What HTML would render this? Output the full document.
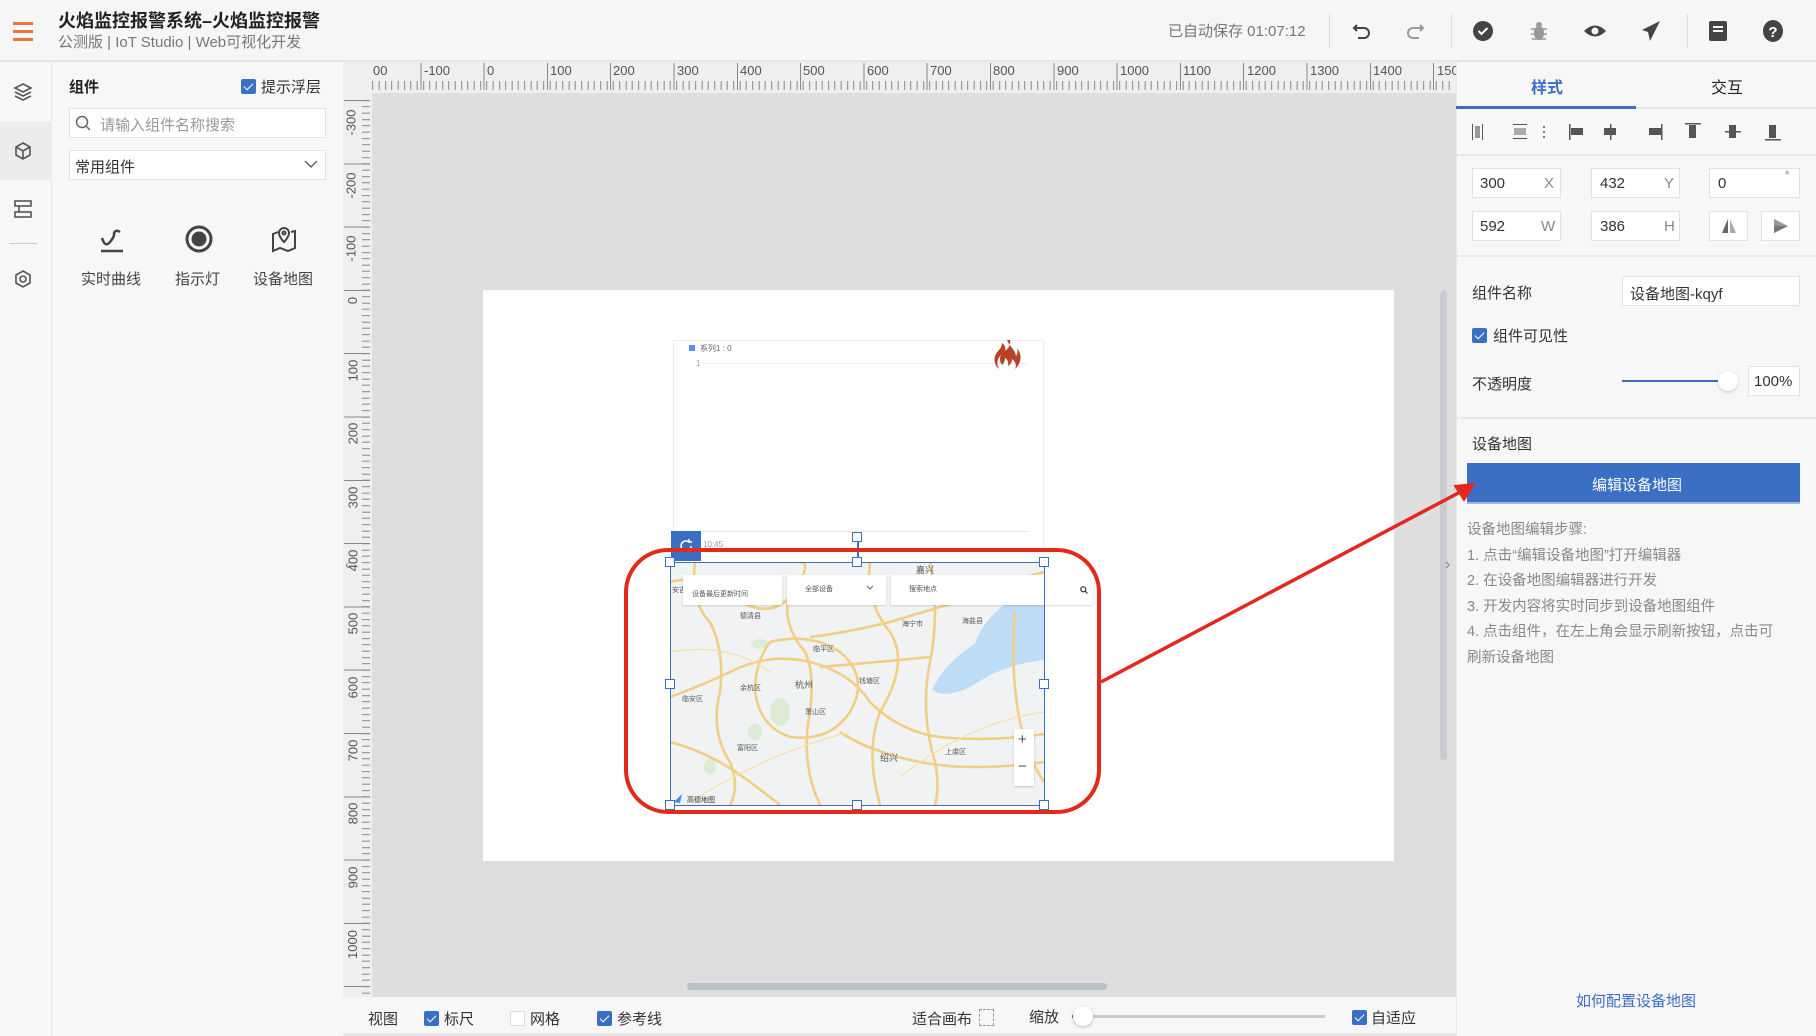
<!DOCTYPE html>
<html><head><meta charset="utf-8">
<style>
*{box-sizing:border-box;margin:0;padding:0}
body{width:1816px;height:1036px;position:relative;overflow:hidden;background:#f7f7f7;font-family:"Liberation Sans","Noto Sans CJK SC",sans-serif;color:#333}
.a{position:absolute}
.t{position:absolute;white-space:nowrap}
.cb{position:absolute;width:15px;height:15px;background:#3b6fc4;border-radius:2px}
.cb:after{content:"";position:absolute;left:5px;top:2px;width:4px;height:8px;border:solid #fff;border-width:0 1.5px 1.5px 0;transform:rotate(45deg)}
.inp{position:absolute;background:#fff;border:1px solid #e2e2e2}
.h{position:absolute;width:10px;height:10px;background:#fff;border:1.5px solid #3b6fc4}
.rl{position:absolute;font-size:13px;color:#555}
</style></head><body>
<!-- header -->
<div class="a" style="left:0;top:0;width:1816px;height:62px;background:#f6f6f6;border-bottom:2px solid #e6e6e6"></div>
<div class="a" style="left:13px;top:22px;width:20px;height:3px;background:#e8773d;box-shadow:0 8px 0 #e8773d,0 16px 0 #e8773d"></div>
<div class="t" style="left:58px;top:7px;font-size:18px;font-weight:bold;color:#222">火焰监控报警系统–火焰监控报警</div>
<div class="t" style="left:58px;top:31px;font-size:15px;color:#777">公测版 | IoT Studio | Web可视化开发</div>
<div class="t" style="left:1168px;top:20px;font-size:15px;color:#777">已自动保存 01:07:12</div>
<div class="a" style="left:1329px;top:14px;width:1px;height:34px;background:#ddd"></div>
<div class="a" style="left:1451px;top:14px;width:1px;height:34px;background:#ddd"></div>
<div class="a" style="left:1687px;top:14px;width:1px;height:34px;background:#ddd"></div>
<svg class="a" style="left:1350px;top:19px" width="24" height="24" viewBox="0 0 24 24" fill="none" stroke="#444" stroke-width="2"><path d="M7 6L4 9l3 3"/><path d="M4 9h10a5 5 0 0 1 0 10H8"/></svg>
<svg class="a" style="left:1403px;top:19px" width="24" height="24" viewBox="0 0 24 24" fill="none" stroke="#999" stroke-width="2"><path d="M17 6l3 3-3 3"/><path d="M20 9H10a5 5 0 0 0 0 10h6"/></svg>
<svg class="a" style="left:1472px;top:20px" width="22" height="22" viewBox="0 0 22 22"><circle cx="11" cy="11" r="10" fill="#444"/><path d="M6.5 11l3 3 6-6" stroke="#fff" stroke-width="2" fill="none"/></svg>
<svg class="a" style="left:1528px;top:20px" width="22" height="22" viewBox="0 0 22 22" fill="#999"><ellipse cx="11" cy="13" rx="5" ry="7"/><circle cx="11" cy="5" r="3"/><path d="M3 9h16M3 14h16M4 19h14" stroke="#999" stroke-width="1.5"/></svg>
<svg class="a" style="left:1583px;top:20px" width="24" height="22" viewBox="0 0 24 22"><path d="M1 11Q12 0 23 11Q12 22 1 11Z" fill="#444"/><circle cx="12" cy="11" r="3.5" fill="#f6f6f6"/></svg>
<svg class="a" style="left:1640px;top:19px" width="22" height="24" viewBox="0 0 22 24"><path d="M20 2L2 11l6 2 2 9 3-6z" fill="#444"/></svg>
<svg class="a" style="left:1708px;top:20px" width="20" height="22" viewBox="0 0 20 22"><rect x="1" y="1" width="18" height="20" rx="2" fill="#444"/><path d="M5 7h10M5 11h10" stroke="#f6f6f6" stroke-width="2"/></svg>
<svg class="a" style="left:1762px;top:19px" width="22" height="24" viewBox="0 0 22 24"><ellipse cx="11" cy="12" rx="10" ry="11" fill="#444"/><text x="11" y="18" font-size="15" font-weight="bold" text-anchor="middle" fill="#fff" font-family="Liberation Sans">?</text></svg>

<!-- left icon bar -->
<div class="a" style="left:0;top:62px;width:52px;height:974px;background:#f7f7f7;border-right:1px solid #e6e6e6"></div>
<div class="a" style="left:0;top:122px;width:52px;height:58px;background:#ececec"></div>
<svg class="a" style="left:13px;top:82px" width="20" height="20" viewBox="0 0 20 20" fill="none" stroke="#555" stroke-width="1.6"><path d="M10 2l8 4-8 4-8-4z"/><path d="M2 10l8 4 8-4M2 14l8 4 8-4"/></svg>
<svg class="a" style="left:13px;top:141px" width="20" height="20" viewBox="0 0 20 20" fill="none" stroke="#555" stroke-width="1.6"><path d="M10 2l7 4v8l-7 4-7-4V6z"/><path d="M3 6l7 4 7-4M10 10v8"/></svg>
<svg class="a" style="left:13px;top:199px" width="20" height="20" viewBox="0 0 20 20" fill="none" stroke="#555" stroke-width="1.6"><rect x="2" y="2" width="16" height="5"/><rect x="2" y="13" width="16" height="5"/><path d="M6 7v6"/></svg>
<div class="a" style="left:9px;top:243px;width:28px;height:1px;background:#ccc"></div>
<svg class="a" style="left:13px;top:269px" width="20" height="20" viewBox="0 0 20 20" fill="none" stroke="#555" stroke-width="1.6"><path d="M10 2l7 4v8l-7 4-7-4V6z"/><circle cx="10" cy="10" r="3"/></svg>

<!-- component panel -->
<div class="a" style="left:52px;top:62px;width:291px;height:974px;background:#f7f7f7"></div>
<div class="t" style="left:69px;top:76px;font-size:15px;font-weight:bold;color:#222">组件</div>
<div class="cb" style="left:241px;top:79px"></div>
<div class="t" style="left:261px;top:76px;font-size:15px;color:#333">提示浮层</div>
<div class="inp" style="left:69px;top:108px;width:257px;height:30px"></div>
<svg class="a" style="left:75px;top:115px" width="17" height="17" viewBox="0 0 17 17" fill="none" stroke="#666" stroke-width="1.5"><circle cx="7" cy="7" r="5.5"/><path d="M11 11l4 4"/></svg>
<div class="t" style="left:100px;top:114px;font-size:15px;color:#999">请输入组件名称搜索</div>
<div class="inp" style="left:69px;top:150px;width:257px;height:30px"></div>
<div class="t" style="left:75px;top:156px;font-size:15px;color:#333">常用组件</div>
<svg class="a" style="left:303px;top:158px" width="16" height="12" viewBox="0 0 16 12" fill="none" stroke="#666" stroke-width="1.5"><path d="M2 3l6 6 6-6"/></svg>
<svg class="a" style="left:98px;top:226px" width="28" height="28" viewBox="0 0 28 28" fill="none" stroke="#444" stroke-width="2.5"><path d="M3 25h22"/><path d="M4 12q3 10 8 4t4-9q2-4 6-1"/></svg>
<svg class="a" style="left:185px;top:225px" width="28" height="28" viewBox="0 0 28 28"><circle cx="14" cy="14" r="12" fill="none" stroke="#444" stroke-width="3"/><circle cx="14" cy="14" r="7.5" fill="#444"/></svg>
<svg class="a" style="left:270px;top:224px" width="28" height="30" viewBox="0 0 28 30" fill="none" stroke="#444" stroke-width="2"><path d="M8 8l-5 2v17l7-3 8 3 7-3V7l-4 1"/><path d="M14 18s-5-5-5-9a5 5 0 0 1 10 0c0 4-5 9-5 9z"/><circle cx="14" cy="9" r="1.5"/></svg>
<div class="t" style="left:81px;top:268px;font-size:15px;color:#444">实时曲线</div>
<div class="t" style="left:175px;top:268px;font-size:15px;color:#444">指示灯</div>
<div class="t" style="left:253px;top:268px;font-size:15px;color:#444">设备地图</div>

<!-- canvas -->
<div class="a" style="left:343px;top:62px;width:1113px;height:935px;background:#dedede"></div>
<div class="a" style="left:343px;top:62px;width:1113px;height:31px;background:#efefef;overflow:hidden">
  <div class="a" style="left:0;top:19px;width:1113px;height:9px;background:repeating-linear-gradient(90deg,transparent 0,transparent 5.33px,#888 5.33px,#888 6.33px);background-position:-1.33px 0"></div>
  <div class="a" style="left:0;top:1px;width:1113px;height:27px;background:repeating-linear-gradient(90deg,#888 0,#888 1px,transparent 1px,transparent 63.3px);background-position:14px 0"></div>
  <div class="rl" style="left:-10px;top:1px">-200</div>
  <div class="rl" style="left:81px;top:1px">-100</div>
  <div class="rl" style="left:144px;top:1px">0</div>
  <div class="rl" style="left:207px;top:1px">100</div>
  <div class="rl" style="left:270px;top:1px">200</div>
  <div class="rl" style="left:334px;top:1px">300</div>
  <div class="rl" style="left:397px;top:1px">400</div>
  <div class="rl" style="left:460px;top:1px">500</div>
  <div class="rl" style="left:524px;top:1px">600</div>
  <div class="rl" style="left:587px;top:1px">700</div>
  <div class="rl" style="left:650px;top:1px">800</div>
  <div class="rl" style="left:714px;top:1px">900</div>
  <div class="rl" style="left:777px;top:1px">1000</div>
  <div class="rl" style="left:840px;top:1px">1100</div>
  <div class="rl" style="left:904px;top:1px">1200</div>
  <div class="rl" style="left:967px;top:1px">1300</div>
  <div class="rl" style="left:1030px;top:1px">1400</div>
  <div class="rl" style="left:1094px;top:1px">1500</div>
</div>
<div class="a" style="left:343px;top:93px;width:29px;height:904px;background:#efefef;overflow:hidden">
  <div class="a" style="left:19px;top:0;width:8px;height:904px;background:repeating-linear-gradient(180deg,transparent 0,transparent 5.33px,#888 5.33px,#888 6.33px);background-position:0 1.7px"></div>
  <div class="a" style="left:1px;top:0;width:26px;height:904px;background:repeating-linear-gradient(180deg,#888 0,#888 1px,transparent 1px,transparent 63.3px);background-position:0 7px"></div>
</div>
<div style="position:absolute;left:343px;top:93px;width:29px;height:904px;overflow:hidden">
<div class="rl" style="left:-5px;top:22px;transform:rotate(-90deg)">-300</div>
<div class="rl" style="left:-5px;top:85px;transform:rotate(-90deg)">-200</div>
<div class="rl" style="left:-5px;top:148px;transform:rotate(-90deg)">-100</div>
<div class="rl" style="left:6px;top:200px;transform:rotate(-90deg)">0</div>
<div class="rl" style="left:-1px;top:270px;transform:rotate(-90deg)">100</div>
<div class="rl" style="left:-1px;top:333px;transform:rotate(-90deg)">200</div>
<div class="rl" style="left:-1px;top:397px;transform:rotate(-90deg)">300</div>
<div class="rl" style="left:-1px;top:460px;transform:rotate(-90deg)">400</div>
<div class="rl" style="left:-1px;top:523px;transform:rotate(-90deg)">500</div>
<div class="rl" style="left:-1px;top:587px;transform:rotate(-90deg)">600</div>
<div class="rl" style="left:-1px;top:650px;transform:rotate(-90deg)">700</div>
<div class="rl" style="left:-1px;top:713px;transform:rotate(-90deg)">800</div>
<div class="rl" style="left:-1px;top:777px;transform:rotate(-90deg)">900</div>
<div class="rl" style="left:-5px;top:844px;transform:rotate(-90deg)">1000</div>
</div>
<div class="a" style="left:343px;top:62px;width:29px;height:31px;background:#efefef"></div>
<div class="t" style="left:373px;top:63px;font-size:13px;color:#555">00</div>

<div class="t" style="left:345px;top:556px;font-size:14px;color:#888">‹</div>
<div class="a" style="left:1440px;top:290px;width:7px;height:470px;background:#c8cbd0;border-radius:4px"></div>
<div class="t" style="left:1445px;top:556px;font-size:16px;color:#888">›</div>
<div class="a" style="left:687px;top:983px;width:420px;height:7px;background:#bcc1c7;border-radius:4px"></div>

<!-- artboard -->
<div class="a" style="left:483px;top:290px;width:911px;height:571px;background:#fff"></div>
<div class="a" style="left:673px;top:340px;width:371px;height:225px;border:1px solid #eee;background:#fff"></div>
<div class="a" style="left:689px;top:345px;width:6px;height:6px;background:#5b8ff9"></div>
<div class="t" style="left:700px;top:343px;font-size:8px;color:#666">系列1 : 0</div>
<div class="t" style="left:696px;top:359px;font-size:8px;color:#999">1</div>
<div class="a" style="left:702px;top:363px;width:326px;height:1px;background:#f0f0f0"></div>
<div class="a" style="left:702px;top:531px;width:326px;height:1px;background:#e4e4e4"></div>
<div class="t" style="left:703px;top:540px;font-size:8px;color:#999">10:45</div>
<svg class="a" style="left:993px;top:339px" width="30" height="34" viewBox="0 0 30 34"><path d="M14 1c2 6 8 9 9 16 2-3 2-6 1-8 5 6 5 15-2 21 2-4 0-8-3-10 0 4-2 6-4 7 1-4-1-7-3-8 0 3-1 5-3 7-2-3-3-6-1-10-5 5-4 10-2 14-5-4-7-12 0-19 2-2 3-5 3-7 3 2 4 5 3 8 4-3 6-7 5-11z" fill="#b5442a"/></svg>

<!-- map -->
<svg class="a" style="left:670px;top:562px" width="374" height="243" viewBox="0 0 374 243">
<rect width="374" height="243" fill="#f1f2f4"/>
<path d="M374 35 L335 42 Q312 60 305 82 Q275 100 262 128 Q278 138 305 122 Q335 102 374 98 Z" fill="#bddcf5"/>
<g fill="#dcebd5"><ellipse cx="110" cy="150" rx="10" ry="14"/><ellipse cx="85" cy="170" rx="7" ry="8"/><ellipse cx="90" cy="82" rx="9" ry="5"/><ellipse cx="40" cy="205" rx="6" ry="8"/></g>
<g fill="none" stroke="#f1cf82" stroke-width="2.6">
<path d="M0 20 Q40 10 70 40 Q110 60 130 20 Q140 0 130 0"/>
<path d="M25 0 Q20 40 40 60 Q55 90 50 130 Q40 170 60 200 Q70 225 60 243"/>
<path d="M0 135 Q40 120 60 110 Q100 90 140 100 Q180 110 200 140 Q230 170 270 175 Q320 180 374 172"/>
<path d="M100 80 Q140 70 170 90 Q200 115 180 150 Q160 180 120 175 Q90 165 85 130 Q85 100 100 80Z"/>
<path d="M120 30 Q110 60 135 90 Q145 110 140 150 Q130 200 150 243"/>
<path d="M200 0 Q195 40 220 70 Q240 100 210 150 Q195 190 210 243"/>
<path d="M260 0 Q270 50 260 100 Q250 150 265 200 Q270 225 265 243"/>
<path d="M140 75 Q180 70 220 60 Q270 45 320 30 Q350 15 374 10"/>
<path d="M150 105 Q210 100 260 95"/>
<path d="M170 170 Q200 190 250 200 Q300 210 374 200"/>
<path d="M0 180 Q40 190 80 220 Q100 235 110 243"/>
<path d="M345 50 Q340 110 350 160 Q360 200 374 220"/>
</g>
<g fill="none" stroke="#f5e0aa" stroke-width="1.2"><path d="M0 90 Q60 80 100 110"/><path d="M20 240 Q100 190 180 170"/><path d="M230 215 Q300 160 374 150"/></g>
<g font-family="Liberation Sans,Noto Sans CJK SC,sans-serif" fill="#555">
<text x="246" y="11" font-size="9">嘉兴</text>
<text x="70" y="56" font-size="7">德清县</text>
<text x="232" y="64" font-size="7">海宁市</text>
<text x="292" y="61" font-size="7">海盐县</text>
<text x="143" y="89" font-size="7">临平区</text>
<text x="125" y="126" font-size="9">杭州</text>
<text x="70" y="128" font-size="7">余杭区</text>
<text x="189" y="121" font-size="7">钱塘区</text>
<text x="12" y="139" font-size="7">临安区</text>
<text x="135" y="152" font-size="7">萧山区</text>
<text x="67" y="188" font-size="7">富阳区</text>
<text x="210" y="199" font-size="9">绍兴</text>
<text x="275" y="192" font-size="7">上虞区</text>
<text x="2" y="30" font-size="7">安吉</text>
<text x="17" y="240" font-size="7" fill="#333">高德地图</text>
</g>
<path d="M4 240 L12 232 L10 241Z" fill="#3b8bea"/>
</svg>
<div class="a" style="left:683px;top:575px;width:99px;height:30px;background:#fff;box-shadow:0 1px 2px rgba(0,0,0,.15)"></div>
<div class="t" style="left:692px;top:589px;font-size:7px;color:#555">设备最后更新时间</div>
<div class="a" style="left:787px;top:575px;width:99px;height:30px;background:#fff;box-shadow:0 1px 2px rgba(0,0,0,.15)"></div>
<div class="t" style="left:805px;top:584px;font-size:7px;color:#555">全部设备</div>
<svg class="a" style="left:866px;top:585px" width="8" height="6" viewBox="0 0 8 6" fill="none" stroke="#666"><path d="M1 1l3 3 3-3"/></svg>
<div class="a" style="left:891px;top:575px;width:202px;height:30px;background:#fff;box-shadow:0 1px 2px rgba(0,0,0,.15)"></div>
<div class="t" style="left:909px;top:584px;font-size:7px;color:#555">搜索地点</div>
<svg class="a" style="left:1080px;top:586px" width="8" height="8" viewBox="0 0 8 8" fill="none" stroke="#333" stroke-width="1.2"><circle cx="3.3" cy="3.3" r="2.5"/><path d="M5 5l2.5 2.5"/></svg>
<div class="a" style="left:1014px;top:729px;width:20px;height:57px;background:#fff;box-shadow:0 1px 2px rgba(0,0,0,.2)"></div>
<div class="t" style="left:1018px;top:731px;font-size:15px;color:#555">+</div>
<div class="t" style="left:1018px;top:758px;font-size:15px;color:#555">−</div>
<!-- selection -->
<div class="a" style="left:670px;top:562px;width:375px;height:244px;border:1.5px solid #3b6fc4"></div>
<div class="a" style="left:857px;top:537px;width:1.5px;height:25px;background:#3b6fc4"></div>
<div class="a" style="left:671px;top:531px;width:30px;height:30px;background:#3b6fc4"></div>
<svg class="a" style="left:678px;top:538px" width="16" height="16" viewBox="0 0 16 16" fill="none" stroke="#fff" stroke-width="1.5"><path d="M13 8a5 5 0 1 1-2-4"/><path d="M11 1v3h3"/></svg>
<div class="h" style="left:852px;top:532px"></div>
<div class="h" style="left:665px;top:557px"></div><div class="h" style="left:852px;top:557px"></div><div class="h" style="left:1039px;top:557px"></div>
<div class="h" style="left:665px;top:679px"></div><div class="h" style="left:1039px;top:679px"></div>
<div class="h" style="left:665px;top:800px"></div><div class="h" style="left:852px;top:800px"></div><div class="h" style="left:1039px;top:800px"></div>
<div class="a" style="left:624px;top:548px;width:477px;height:266px;border:4px solid #e3291c;border-radius:44px"></div>

<!-- bottom bar -->
<div class="a" style="left:343px;top:997px;width:1113px;height:36px;background:#f7f7f7"></div>
<div class="a" style="left:343px;top:1033px;width:1113px;height:3px;background:#e6e6e6"></div>
<div class="t" style="left:368px;top:1008px;font-size:15px;color:#333">视图</div>
<div class="cb" style="left:424px;top:1011px"></div><div class="t" style="left:444px;top:1008px;font-size:15px">标尺</div>
<div class="a" style="left:510px;top:1011px;width:15px;height:15px;background:#fff;border:1px solid #ddd"></div><div class="t" style="left:530px;top:1008px;font-size:15px">网格</div>
<div class="cb" style="left:597px;top:1011px"></div><div class="t" style="left:617px;top:1008px;font-size:15px">参考线</div>
<div class="t" style="left:912px;top:1008px;font-size:15px">适合画布</div>
<div class="a" style="left:979px;top:1009px;width:15px;height:17px;border:1.5px dashed #999"></div>
<div class="t" style="left:1029px;top:1006px;font-size:15px">缩放</div>
<div class="a" style="left:1072px;top:1015px;width:253px;height:3px;background:#ccc"></div>
<div class="a" style="left:1072px;top:1015px;width:8px;height:3px;background:#3b6fc4"></div>
<div class="a" style="left:1073px;top:1006px;width:20px;height:20px;background:#fff;border-radius:50%;box-shadow:0 1px 3px rgba(0,0,0,.25)"></div>
<div class="cb" style="left:1352px;top:1010px"></div><div class="t" style="left:1371px;top:1007px;font-size:15px">自适应</div>

<!-- right panel -->
<div class="a" style="left:1456px;top:62px;width:360px;height:974px;background:#f7f7f7;border-left:1px solid #e6e6e6"></div>
<div class="a" style="left:1456px;top:107px;width:360px;height:2px;background:#e6e6e6"></div>
<div class="a" style="left:1456px;top:106px;width:180px;height:3px;background:#3b6fc4"></div>
<div class="t" style="left:1531px;top:74px;font-size:16px;color:#3b6fc4;font-weight:bold">样式</div>
<div class="t" style="left:1711px;top:74px;font-size:16px;color:#222">交互</div>
<svg class="a" style="left:1467px;top:120px" width="320" height="24" viewBox="0 0 320 24">
<g fill="#555">
<rect x="5" y="4" width="1" height="16"/><rect x="8" y="6" width="5" height="12" fill="#999"/><rect x="15" y="4" width="1" height="16"/>
<rect x="46" y="4" width="14" height="1"/><rect x="47" y="8" width="12" height="7" fill="#aaa"/><rect x="46" y="18" width="14" height="1"/>
<circle cx="77" cy="7" r="1"/><circle cx="77" cy="12" r="1"/><circle cx="77" cy="17" r="1"/>
<rect x="102" y="4" width="1.5" height="16"/><rect x="104" y="8" width="12" height="7"/>
<rect x="143" y="4" width="1.5" height="16"/><rect x="137" y="8" width="12" height="7"/>
<rect x="194" y="4" width="1.5" height="16"/><rect x="182" y="8" width="12" height="7"/>
<rect x="218" y="3" width="16" height="1.5"/><rect x="222" y="5" width="7" height="13"/>
<rect x="258" y="11" width="16" height="1.5"/><rect x="262" y="5" width="7" height="13"/>
<rect x="298" y="19" width="16" height="1.5"/><rect x="302" y="5" width="7" height="13"/>
</g></svg>
<div class="a" style="left:1456px;top:154px;width:360px;height:2px;background:#e9e9e9"></div>
<div class="inp" style="left:1472px;top:168px;width:89px;height:30px"></div><div class="t" style="left:1480px;top:175px;font-size:15px">300</div><div class="t" style="left:1544px;top:175px;font-size:15px;color:#888">X</div>
<div class="inp" style="left:1591px;top:168px;width:89px;height:30px"></div><div class="t" style="left:1600px;top:175px;font-size:15px">432</div><div class="t" style="left:1664px;top:175px;font-size:15px;color:#888">Y</div>
<div class="inp" style="left:1709px;top:168px;width:91px;height:30px"></div><div class="t" style="left:1718px;top:175px;font-size:15px">0</div><div class="t" style="left:1785px;top:170px;font-size:11px;color:#666">°</div>
<div class="inp" style="left:1472px;top:211px;width:89px;height:30px"></div><div class="t" style="left:1480px;top:218px;font-size:15px">592</div><div class="t" style="left:1541px;top:218px;font-size:15px;color:#888">W</div>
<div class="inp" style="left:1591px;top:211px;width:89px;height:30px"></div><div class="t" style="left:1600px;top:218px;font-size:15px">386</div><div class="t" style="left:1664px;top:218px;font-size:15px;color:#888">H</div>
<div class="inp" style="left:1709px;top:211px;width:39px;height:30px"></div>
<svg class="a" style="left:1720px;top:217px" width="18" height="18" viewBox="0 0 18 18"><path d="M8 2L2 16h6z" fill="#666"/><path d="M10 2l6 14h-6z" fill="#aaa"/></svg>
<div class="inp" style="left:1761px;top:211px;width:39px;height:30px"></div>
<svg class="a" style="left:1772px;top:217px" width="18" height="18" viewBox="0 0 18 18"><path d="M2 2l14 7-14 7z" fill="#999"/><path d="M2 9h14L2 16z" fill="#777"/></svg>
<div class="a" style="left:1456px;top:255px;width:360px;height:2px;background:#e9e9e9"></div>
<div class="t" style="left:1472px;top:282px;font-size:15px">组件名称</div>
<div class="inp" style="left:1622px;top:276px;width:178px;height:30px"></div>
<div class="t" style="left:1630px;top:283px;font-size:15px">设备地图-kqyf</div>
<div class="cb" style="left:1472px;top:328px"></div><div class="t" style="left:1493px;top:325px;font-size:15px">组件可见性</div>
<div class="t" style="left:1472px;top:373px;font-size:15px">不透明度</div>
<div class="a" style="left:1622px;top:380px;width:103px;height:2px;background:#3b6fc4"></div>
<div class="a" style="left:1718px;top:371px;width:20px;height:20px;background:#fff;border-radius:50%;box-shadow:0 1px 3px rgba(0,0,0,.2)"></div>
<div class="inp" style="left:1748px;top:366px;width:52px;height:30px"></div><div class="t" style="left:1754px;top:373px;font-size:15px">100%</div>
<div class="a" style="left:1456px;top:417px;width:360px;height:2px;background:#e9e9e9"></div>
<div class="t" style="left:1472px;top:433px;font-size:15px">设备地图</div>
<div class="a" style="left:1467px;top:463px;width:333px;height:41px;background:#3b6fc4;border-bottom:2px solid #9bb7e3"></div>
<div class="t" style="left:1592px;top:474px;font-size:15px;color:#fff">编辑设备地图</div>
<div style="position:absolute;left:1467px;top:518px;font-size:14.5px;line-height:25.5px;color:#888;width:340px">设备地图编辑步骤:<br>1. 点击“编辑设备地图”打开编辑器<br>2. 在设备地图编辑器进行开发<br>3. 开发内容将实时同步到设备地图组件<br>4. 点击组件，在左上角会显示刷新按钮，点击可<br>刷新设备地图</div>
<div class="t" style="left:1576px;top:990px;font-size:15px;color:#3b6fc4">如何配置设备地图</div>

<svg class="a" style="left:0;top:0" width="1816" height="1036" viewBox="0 0 1816 1036"><path d="M1101 682L1464 490" stroke="#e3291c" stroke-width="3.5"/><path d="M1474 484L1455 486L1464 500Z" fill="#e3291c" stroke="#e3291c" stroke-width="2"/></svg>
</body></html>
